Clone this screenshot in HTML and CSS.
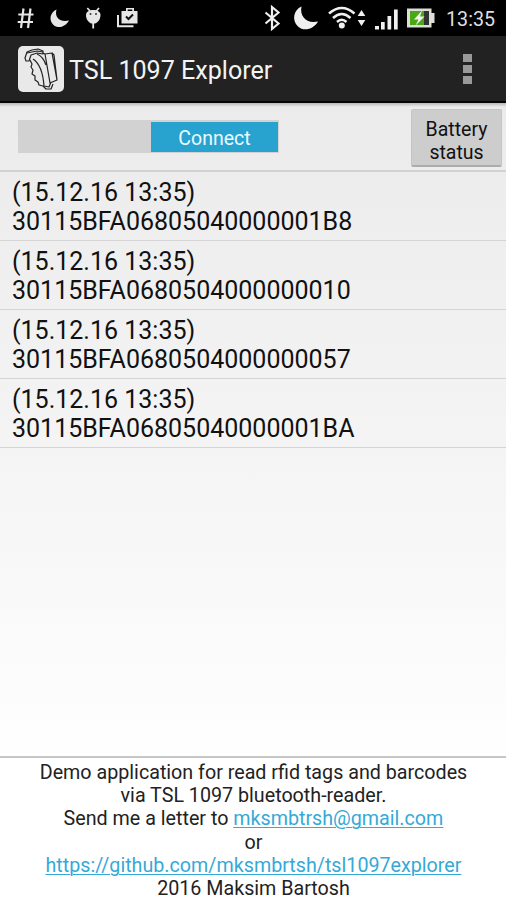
FILE: index.html
```html
<!DOCTYPE html>
<html lang="en">
<head>
<meta charset="utf-8">
<title>TSL 1097 Explorer</title>
<link rel="stylesheet" href="styles.css">
</head>
<body>
<div class="screen">
  <header class="status-bar">
    <svg class="notifications" width="130" height="36" viewBox="10 0 130 36" fill="#e6e6e6">
      <path d="M23.500 8.500L21 28M30.500 8.500L28 28M18.300 14.500H33.500M17.700 22H33" stroke="#e6e6e6" stroke-width="2.200" fill="none"/>
      <path d="M56.500 9.500C54.500 17 59 22.500 69 20.500C65.500 27 58 29 53.500 25C48.500 20 50 12.500 56.500 9.500Z"/>
      <path d="M87.300 8L90 11M99 8L96.400 11M93.200 22V28.500" stroke="#e6e6e6" stroke-width="1.800"/>
      <path d="M86 15C86 12 89 10 93.200 10S100.500 12 100.500 15C100.500 20 97 23.800 93.200 23.800S86 20 86 15Z"/>
      <circle cx="90.500" cy="14" r="1" fill="#333"/><circle cx="96" cy="14" r="1" fill="#333"/>
      <path d="M118 15V26.200H133.500" fill="none" stroke="#e6e6e6" stroke-width="2"/>
      <path d="M121.500 11H126V8H134V11H137.500V23.500H121.500ZM127.700 11H132.300V9.500H127.700Z" fill-rule="evenodd"/>
      <path d="M126 16.500L128.500 19L133 14.500" fill="none" stroke="#111" stroke-width="2"/>
    </svg>
    <svg class="indicators" width="175" height="36" viewBox="260 0 175 36" fill="#f0f0f0">
      <path d="M265.500 12.500L278.500 23.500L272 29V7L278.500 12.500L265.500 23.500" fill="none" stroke="#f0f0f0" stroke-width="2.200"/>
      <path d="M301.500 6.500C299.500 16 306 24 318 21.500C314 29 304 32 298 26.500C291.500 20 293.500 10 301.500 6.500Z"/>
      <path d="M329 13.500Q341.800 2.500 354.500 13.500M333 18Q341.800 10 350.500 18M337 22Q341.800 17.500 346.500 22" fill="none" stroke="#f0f0f0" stroke-width="2.500"/>
      <circle cx="341.800" cy="25.500" r="3"/>
      <path d="M361.500 10L365.300 16H357.700ZM361.500 26L365.300 20H357.700Z"/>
      <path d="M375 26H379V29.500H375ZM381 22H384.700V29.500H381ZM387.500 16H391.200V29.500H387.500ZM394 9.500H397.700V29.500H394Z"/>
      <path d="M407 8.500H431.500V13H434.500V23H431.500V27.500H407Z" fill="#deded8"/>
      <path d="M410 11H429V25H410Z" fill="#333"/>
      <path d="M410 11H424V25H410Z" fill="#48a818"/>
      <path d="M422 10.500L414 19.500H418.500L415.500 25.500L424.500 16.500H420Z" fill="#f4f4ed"/>
    </svg>
    <span class="clock">13:35</span>
  </header>
  <div class="app-bar">
    <svg class="app-icon" width="46" height="46" viewBox="0 0 46 46" fill="none" stroke="#222" stroke-width="1.200" stroke-linejoin="round">
      <rect width="46" height="46" rx="5" fill="#e9e9e9" stroke="none"/>
      <path d="M8 15L7 12L9 6L14 4L20 3L25 5V8L19 7L13 9L11 15Z"/>
      <path d="M9 7L14 6L19 5L25 6M12 14L14 18L13 21L15 24L14 28L17 30L17 34L20 36L21 39L25 40L28 43H33L35 38"/>
      <path d="M15 13C21 17 25 26 26 40L31 41L33 36M19 8C24 10 26 13 28 19M27 8L34 7L39 34L32 37L27 8L25 7M34 7L36 9L39 34"/>
    </svg>
    <h1>TSL 1097 Explorer</h1>
    <div class="overflow"><i></i><i></i><i></i></div>
  </div>
  <section class="controls">
    <div class="switch"><span class="thumb">Connect</span></div>
    <button class="battery">Battery<br>status</button>
  </section>
  <main class="scans">
    <div class="scan">(15.12.16 13:35)<br>30115BFA06805040000001B8</div>
    <div class="scan">(15.12.16 13:35)<br>30115BFA0680504000000010</div>
    <div class="scan">(15.12.16 13:35)<br>30115BFA0680504000000057</div>
    <div class="scan">(15.12.16 13:35)<br>30115BFA06805040000001BA</div>
  </main>
  <footer>Demo application for read rfid tags and barcodes<br>via TSL 1097 bluetooth-reader.<br>Send me a letter to <a href="#">mksmbtrsh@gmail.com</a><br>or<br><a href="#">https://github.com/mksmbrtsh/tsl1097explorer</a><br>2016 Maksim Bartosh</footer>
</div>
</body>
</html>
```
FILE: styles.css
```css
* { box-sizing: border-box; }
body { margin: 0; font-family: Roboto, sans-serif; color: #111; }
.screen {
  width: 506px;
  height: 900px;
  display: flex;
  flex-direction: column;
  overflow: hidden;
  background: linear-gradient(#ebebeb 102px, #eeeeee 220px, #f4f4f4 440px, #fefefe 740px);
}
.status-bar { height: 36px; display: flex; background: #000; flex: none; }
.notifications { margin-left: 10px; }
.indicators { margin-left: 120px; }
.clock { margin-left: 11px; line-height: 39px; font-size: 19.7px; color: #dedede; white-space: nowrap; }
.app-bar {
  height: 67px;
  flex: none;
  display: flex;
  align-items: center;
  padding: 1px 32px 0 18px;
  background: #222;
  border-bottom: 2px solid #050505;
}
.app-icon { flex: none; }
h1 { margin: 3px 0 0 5px; font-size: 25.1px; font-weight: 400; color: #f3f3f3; white-space: nowrap; }
.overflow { margin-left: auto; margin-right: 2px; display: grid; gap: 3px; }
.overflow i { width: 9px; height: 8px; background: #999; }
.controls {
  height: 69px;
  flex: none;
  display: flex;
  align-items: center;
  justify-content: space-between;
  padding: 0 4px 0 18px;
  border-bottom: 2px solid #d2d2d2;
  background: linear-gradient(#b8b8b8, transparent 4px);
}
.switch { width: 261px; height: 33px; padding: 2px 1px 1px; display: flex; justify-content: flex-end; background: #d2d2d2; }
.thumb { width: 127px; height: 30px; line-height: 33px; text-align: center; background: #28a3d0; color: #eefaff; font-size: 19.5px; }
.battery {
  width: 91px;
  height: 58px;
  margin-top: 2px;
  padding: 8px 0 0;
  border: 1px solid #c4c4c4;
  border-bottom: 2px solid #acacac;
  border-radius: 2px;
  background: #cdcdcd;
  font: 19.5px/23px Roboto, sans-serif;
  color: #111;
}
.scan { height: 69px; padding: 6px 12px 0; border-bottom: 1px solid #d4d4d4; font-size: 25px; line-height: 29px; white-space: nowrap; }
footer { margin-top: auto; height: 144px; padding: 3px 0 0 1px; border-top: 2px solid #c6c6c6; background: #fff; text-align: center; font-size: 19.7px; line-height: 23.2px; white-space: nowrap; color: #222; }
a { color: #35a9d7; text-underline-offset: 2px; text-decoration-thickness: 1px; }
```
